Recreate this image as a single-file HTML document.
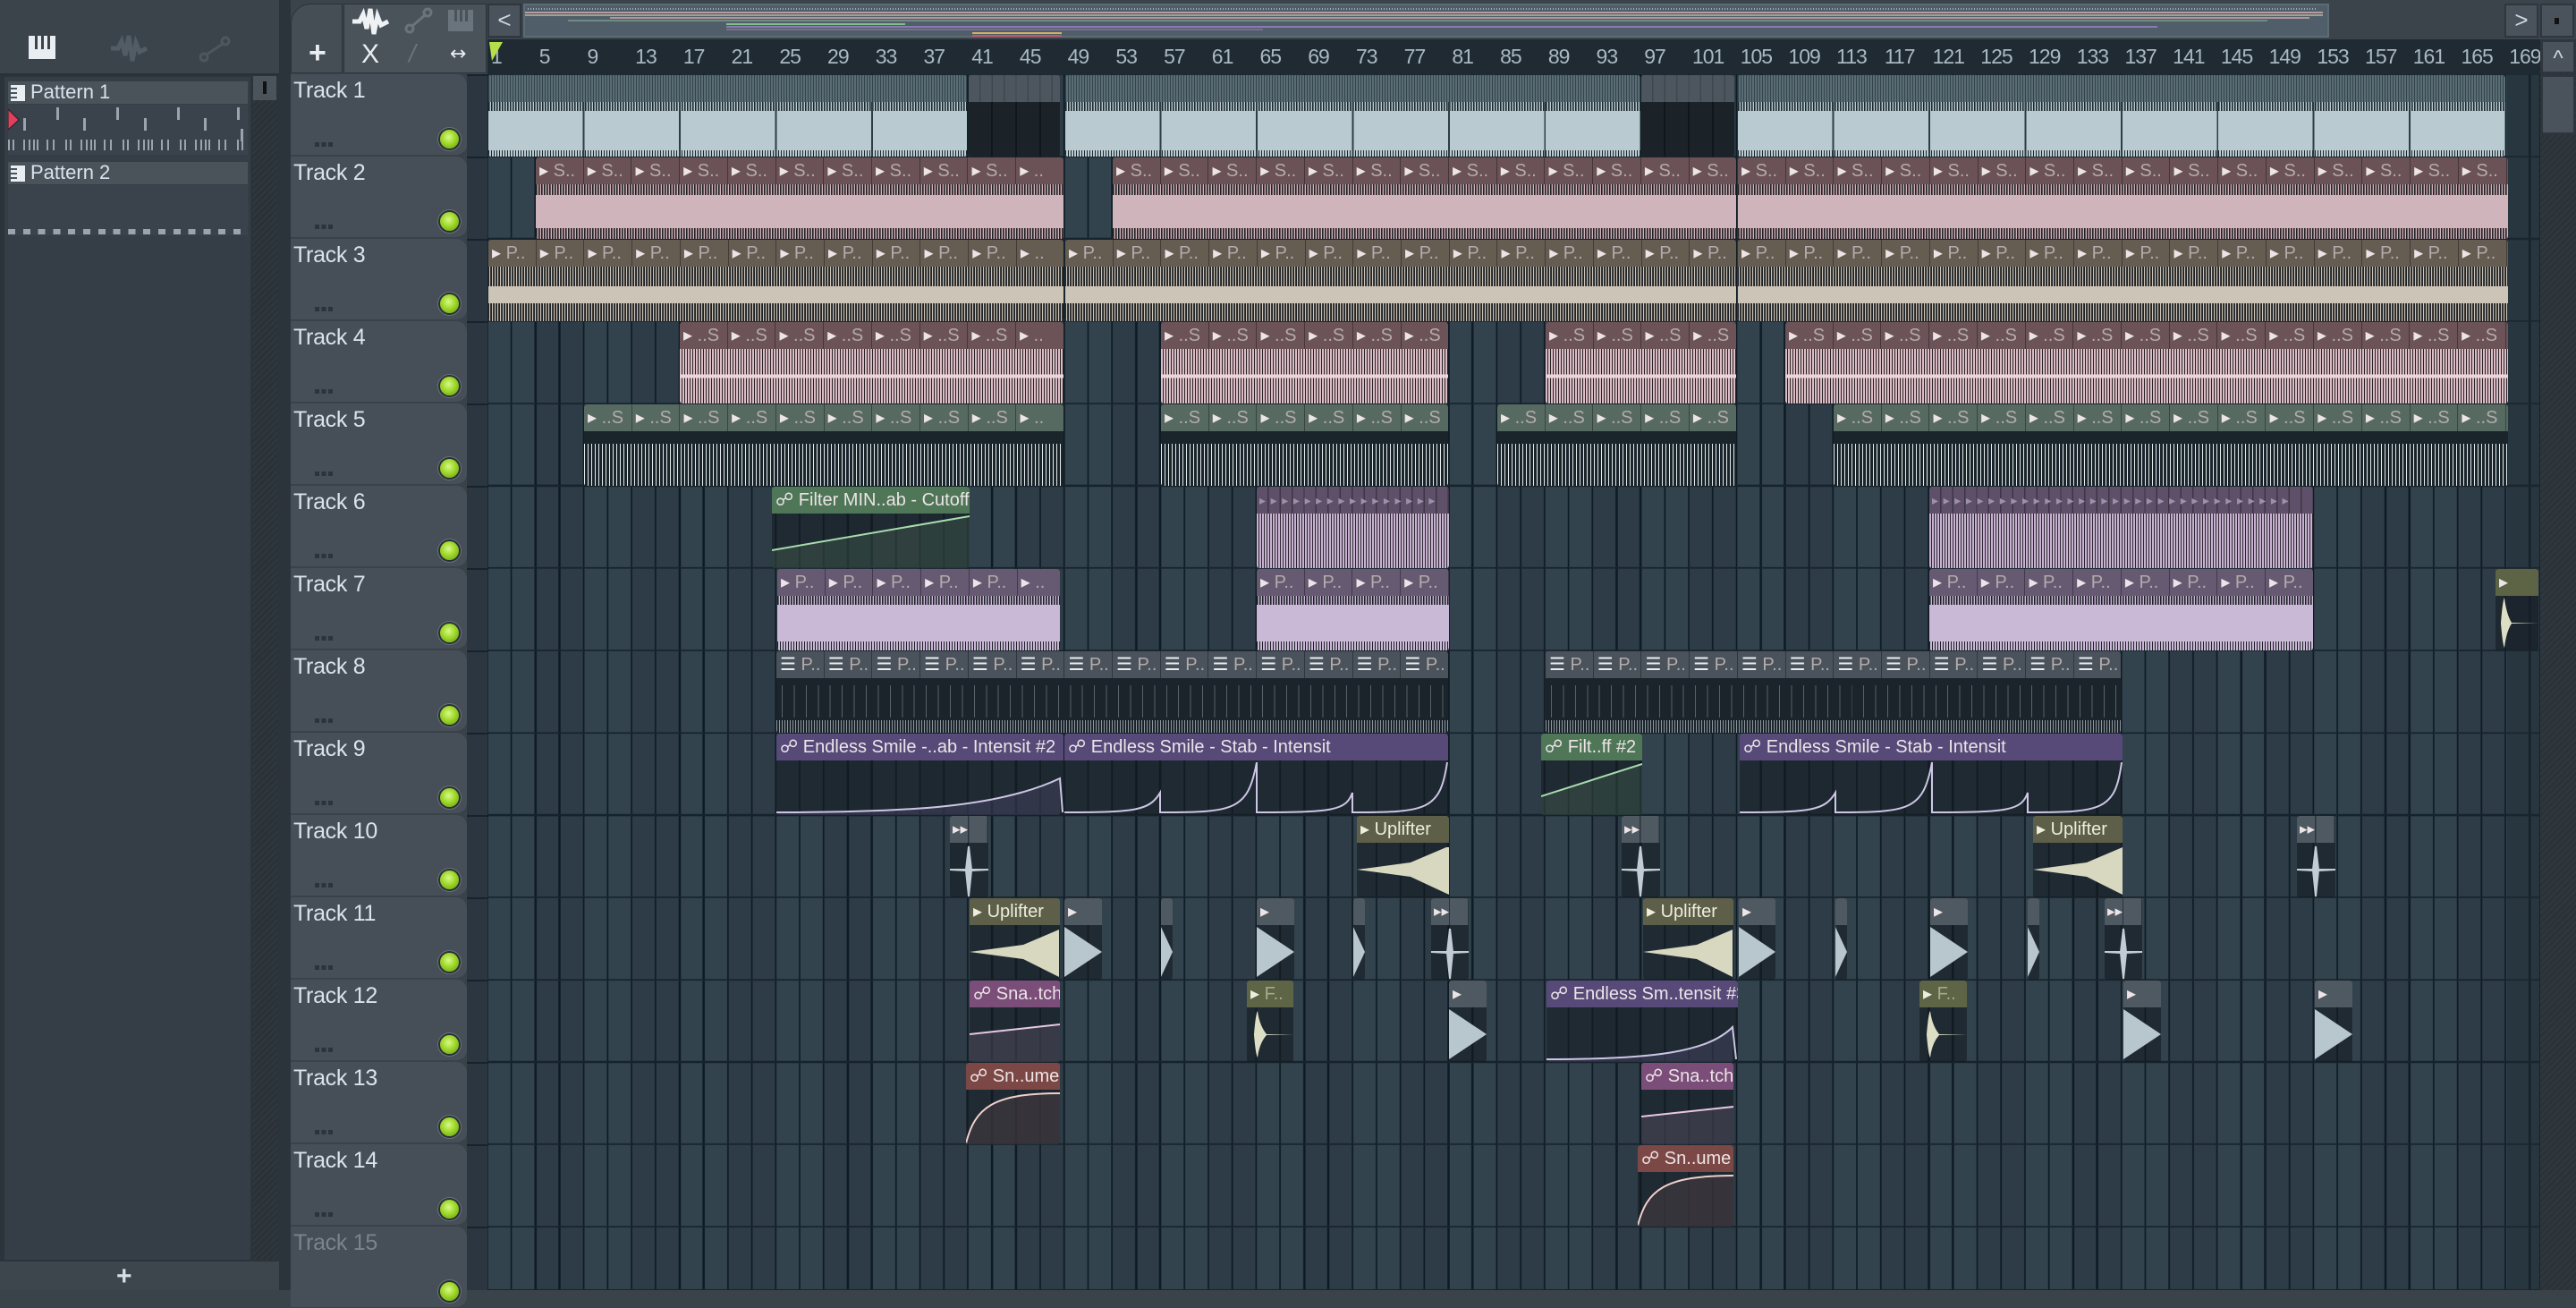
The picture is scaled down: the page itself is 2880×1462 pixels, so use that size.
<!DOCTYPE html>
<html><head><meta charset="utf-8">
<style>
*{box-sizing:border-box}
body{margin:0;width:2880px;height:1442px;overflow:hidden;background:#3a424a;font-family:"Liberation Sans Narrow","Liberation Sans",sans-serif;position:relative}
.a{position:absolute}
.grid{left:545px;top:83px;width:2295px;height:1359px;
background:repeating-linear-gradient(180deg,#17232c 0 2px,transparent 2px 92px),
repeating-linear-gradient(90deg,#0f1b24 0 2px,transparent 2px 26.86px),
repeating-linear-gradient(90deg,#33434e 0 53.72px,#2d3c47 53.72px 107.44px);background-position:0 -1px,-1px 0,0 0}
.th{left:325px;width:197px;height:91px;background:#464e57;border-radius:0 12px 12px 0;border-bottom:1px solid #3a4149}
.th span{position:absolute;left:3px;top:4px;font-size:25px;color:#dbe3ea;letter-spacing:-0.3px}
.th .led{position:absolute;left:167px;top:62px;width:21px;height:21px;border-radius:50%;background:radial-gradient(circle at 45% 40%,#d8f88a 0,#9ed829 45%,#5f9614 100%);box-shadow:0 0 0 2px #2a3136,0 0 0 3px #6a7278}
.th .dots{position:absolute;left:27px;top:76px;width:20px;height:5px;background:repeating-linear-gradient(90deg,#2c333a 0 5px,transparent 5px 7.5px)}
.c{position:absolute;height:91px;overflow:hidden;border-radius:3px}
.h{height:30px;display:flex;align-items:center;font-size:20px;white-space:nowrap;overflow:hidden;color:#ece4e6;border-radius:3px 3px 0 0}
.h i{font-style:normal;flex:0 0 53.72px;height:30px;line-height:30px;padding-left:4px;border-right:1px solid rgba(0,0,0,.35);overflow:hidden}
.h i b{font-weight:normal;color:#b4aaac}
.h u{text-decoration:none;padding-left:4px;line-height:30px}
.bd{height:61px;position:relative}
.w1{background:repeating-linear-gradient(90deg,#1c272d 0 1px,#5d6d74 1px 2px,transparent 2px 3px) 0 0/100% 10px no-repeat,repeating-linear-gradient(90deg,#1c272d 0 1px,transparent 1px 3px) 0 100%/100% 7px no-repeat,#b9cad0}
.h1{background:repeating-linear-gradient(90deg,#33444c 0 1px,#5a6c74 1px 3px)}
.w2{background:repeating-linear-gradient(90deg,#1e2227 0 1px,#6a555a 1px 2px,transparent 2px 3px) 0 0/100% 12px no-repeat,repeating-linear-gradient(90deg,#1e2227 0 1px,#6a555a 1px 2px,transparent 2px 3px) 0 100%/100% 12px no-repeat,#cfb5bb}
.w3{background:repeating-linear-gradient(90deg,#20252a 0 1px,#cdc4b8 1px 2px,#3a3835 2px 3px) 0 0/100% 22px no-repeat,repeating-linear-gradient(90deg,#20252a 0 1px,#cdc4b8 1px 2px,#3a3835 2px 3px) 0 100%/100% 20px no-repeat,#cdc4b8}
.w4{background:linear-gradient(180deg,transparent 0 47%,#ecd6dc 47% 53%,transparent 53%),repeating-linear-gradient(90deg,#dbbdc6 0 2px,#2a2226 2px 3px)}
.w5{background:linear-gradient(180deg,#1a252b 0 14px,transparent 14px),repeating-linear-gradient(90deg,#e4eaec 0 1px,#1a252b 1px 4px)}
.w6{background:repeating-linear-gradient(90deg,#c7b3cf 0 2px,#2e2634 2px 3px)}
.w7{background:repeating-linear-gradient(90deg,#1e2126 0 1px,#6a5f74 1px 2px,transparent 2px 3px) 0 0/100% 10px no-repeat,repeating-linear-gradient(90deg,#1e2126 0 1px,transparent 1px 3px) 0 100%/100% 10px no-repeat,#c9b8d6}
.w8{background:repeating-linear-gradient(90deg,#8d979e 0 1px,transparent 1px 3px) 0 100%/100% 14px no-repeat,repeating-linear-gradient(90deg,transparent 0 6px,#56616a 6px 7px,transparent 7px 13.43px) 0 8px/100% 36px no-repeat,#1b242a}
.dk{background:rgba(18,26,31,.72)}
.au{background:rgba(20,27,33,.6)}
.ru span{display:inline-block;width:53.72px;font-size:23px;color:#a9b8c3;letter-spacing:-1px}
.dv{position:absolute;left:0;top:0;width:100%;height:100%;background:repeating-linear-gradient(90deg,transparent 0 105.5px,#2e3d45 105.5px 107.44px)}
</style></head><body>

<div class="a" style="left:0;top:0;width:2880px;height:83px;background:#3b434b"></div>
<div class="a" style="left:0;top:82px;width:312px;height:2px;background:#2a3036"></div>
<svg class="a" style="left:30px;top:38px" width="36" height="30"><rect x="2" y="2" width="30" height="26" fill="#e8eef2"/><rect x="9" y="2" width="3" height="15" fill="#3b434b"/><rect x="16" y="2" width="3" height="15" fill="#3b434b"/><rect x="23" y="2" width="3" height="15" fill="#3b434b"/></svg>
<svg class="a" style="left:122px;top:38px" width="44" height="32"><path d="M2 16 L10 16 L14 8 L18 24 L22 2 L26 30 L30 10 L34 20 L42 16" stroke="#525c64" stroke-width="5" fill="none"/></svg>
<svg class="a" style="left:222px;top:40px" width="36" height="30"><circle cx="6" cy="24" r="4" fill="none" stroke="#4d575f" stroke-width="3"/><circle cx="30" cy="6" r="4" fill="none" stroke="#4d575f" stroke-width="3"/><line x1="9" y1="21" x2="27" y2="9" stroke="#4d575f" stroke-width="3"/></svg>

<div class="a" style="left:312px;top:0;width:13px;height:1442px;background:#2c343b"></div>
<div class="a" style="left:325px;top:4px;width:58px;height:78px;background:#454d55;border-radius:22px 0 0 0;border:1px solid #2c333a"></div>
<div class="a" style="left:345px;top:40px;font-size:34px;color:#e8eef2;font-family:'Liberation Sans',sans-serif;font-weight:bold">+</div>
<div class="a" style="left:384px;top:4px;width:160px;height:78px;background:#4a525a;border:1px solid #2c333a"></div>
<svg class="a" style="left:392px;top:8px" width="44" height="32"><path d="M2 16 L10 16 L14 8 L18 24 L22 2 L26 30 L30 10 L34 20 L42 16" stroke="#eef2f4" stroke-width="5" fill="none"/></svg>
<svg class="a" style="left:452px;top:8px" width="32" height="30"><circle cx="6" cy="24" r="4" fill="none" stroke="#6a747c" stroke-width="3"/><circle cx="26" cy="6" r="4" fill="none" stroke="#6a747c" stroke-width="3"/><line x1="9" y1="21" x2="23" y2="9" stroke="#6a747c" stroke-width="3"/></svg>
<svg class="a" style="left:500px;top:10px" width="30" height="26"><rect x="1" y="1" width="28" height="24" fill="#6a747c"/><rect x="8" y="1" width="3" height="13" fill="#4a525a"/><rect x="14" y="1" width="3" height="13" fill="#4a525a"/><rect x="20" y="1" width="3" height="13" fill="#4a525a"/></svg>
<div class="a" style="left:404px;top:44px;font-size:30px;color:#e8eef2;font-family:'Liberation Sans',sans-serif">X</div>
<div class="a" style="left:457px;top:44px;font-size:28px;color:#6a747c;font-style:italic">/</div>
<div class="a" style="left:503px;top:48px;font-size:22px;color:#e8eef2;font-family:'DejaVu Sans',sans-serif">↔</div>

<div class="a" style="left:545px;top:4px;width:38px;height:38px;background:#4a535b;border:2px solid #2f363d;color:#cfd6dc;font-size:26px;text-align:center;line-height:32px">&lt;</div>
<div class="a" style="left:585px;top:4px;width:2019px;height:38px;background:#4f5e68;border:2px solid #5d6b74">
 <div class="a" style="left:3px;top:3px;width:2000px;height:2px;background:repeating-linear-gradient(90deg,#9eaab2 0 1px,transparent 1px 3px)"></div>
 <div class="a" style="left:0;top:7px;width:2010px;height:2px;background:#b49ca0"></div>
 <div class="a" style="left:0;top:10px;width:2010px;height:2px;background:#a89d8f"></div>
 <div class="a" style="left:95px;top:13px;width:1900px;height:2px;background:#b4949c"></div>
 <div class="a" style="left:48px;top:16px;width:1900px;height:2px;background:#6f8c84"></div>
 <div class="a" style="left:225px;top:20px;width:200px;height:2px;background:#7fbf8a"></div>
 <div class="a" style="left:225px;top:23px;width:1600px;height:2px;background:#8a7ab0"></div>
 <div class="a" style="left:225px;top:26px;width:600px;height:2px;background:#7a6c94"></div>
 <div class="a" style="left:500px;top:30px;width:100px;height:2px;background:#d0b35e"></div>
 <div class="a" style="left:500px;top:33px;width:100px;height:2px;background:#c85468"></div>
</div>
<div class="a" style="left:2800px;top:4px;width:38px;height:38px;background:#4a535b;border:2px solid #2f363d;color:#cfd6dc;font-size:26px;text-align:center;line-height:32px">&gt;</div>
<div class="a" style="left:2840px;top:4px;width:38px;height:38px;background:#4a535b;border:2px solid #2f363d"><div class="a" style="left:14px;top:14px;width:5px;height:7px;background:#111"></div></div>

<div class="a" style="left:545px;top:44px;width:2295px;height:39px;background:#1f2a33"></div>
<div class="a ru" style="left:549px;top:50px;white-space:nowrap"><span>1</span><span>5</span><span>9</span><span>13</span><span>17</span><span>21</span><span>25</span><span>29</span><span>33</span><span>37</span><span>41</span><span>45</span><span>49</span><span>53</span><span>57</span><span>61</span><span>65</span><span>69</span><span>73</span><span>77</span><span>81</span><span>85</span><span>89</span><span>93</span><span>97</span><span>101</span><span>105</span><span>109</span><span>113</span><span>117</span><span>121</span><span>125</span><span>129</span><span>133</span><span>137</span><span>141</span><span>145</span><span>149</span><span>153</span><span>157</span><span>161</span><span>165</span><span>169</span></div>
<svg class="a" style="left:546px;top:46px" width="18" height="24"><path d="M1 1 L16 1 L4 22 Z" fill="#b6e04a"/></svg>

<div class="a" style="left:2840px;top:44px;width:40px;height:1398px;background:repeating-linear-gradient(135deg,#30383f 0 2px,#2b3238 2px 5px)"></div>
<div class="a" style="left:2841px;top:45px;width:38px;height:37px;background:#4a535b;border:2px solid #2f363d;color:#cfd6dc;font-size:24px;text-align:center;line-height:38px">^</div>
<div class="a" style="left:2841px;top:84px;width:38px;height:66px;background:#4a535b;border:2px solid #2f363d"></div>

<div class="a" style="left:0;top:84px;width:312px;height:1326px;background:#2c343b"></div>
<div class="a" style="left:5px;top:86px;width:275px;height:1322px;background:#353e47"></div>
<div class="a" style="left:282px;top:86px;width:28px;height:1322px;background:repeating-linear-gradient(135deg,#30383f 0 2px,#2a3137 2px 5px)"></div>
<div class="a" style="left:283px;top:85px;width:26px;height:27px;background:#4b535b"><div class="a" style="left:11px;top:6px;width:4px;height:14px;background:#111"></div></div>
<div class="a" style="left:0;top:1410px;width:312px;height:32px;background:#3d454d"></div>
<div class="a" style="left:130px;top:1410px;font-size:30px;color:#d8dfe5;font-family:'Liberation Sans',sans-serif;font-weight:bold">+</div>

<div class="a" style="left:9px;top:91px;width:268px;height:25px;background:#4a525a"></div>
<svg class="a" style="left:12px;top:95px" width="16" height="18"><rect width="16" height="18" fill="#e8eef2"/><rect x="0" y="3" width="7" height="2" fill="#4a525a"/><rect x="0" y="8" width="7" height="2" fill="#4a525a"/><rect x="0" y="13" width="7" height="2" fill="#4a525a"/></svg>
<div class="a" style="left:34px;top:90px;font-size:22px;color:#d9e2ea">Pattern 1</div>
<div class="a" style="left:9px;top:117px;width:268px;height:56px;background:#3a434c"></div>
<svg class="a" style="left:9px;top:117px" width="268" height="56">
<path d="M0 5 L12 17 L0 28Z" fill="#e0405e" stroke="#222" stroke-width="1"/>
<g fill="#9aa4ac"><rect x="54" y="3" width="3" height="14"/><rect x="121" y="3" width="3" height="14"/><rect x="189" y="3" width="3" height="14"/><rect x="256" y="3" width="3" height="14"/>
<rect x="17" y="15" width="3" height="14"/><rect x="84" y="15" width="3" height="14"/><rect x="152" y="15" width="3" height="14"/><rect x="219" y="15" width="3" height="14"/><rect x="260" y="27" width="3" height="14"/></g>
<path d="M0 45h268" stroke="#9aa4ac" stroke-width="12" stroke-dasharray="2 3 2 10 2 4 2 3 2 2 2 9 2 5 2 12" /></svg>
<div class="a" style="left:9px;top:181px;width:268px;height:25px;background:#4a525a"></div>
<svg class="a" style="left:12px;top:185px" width="16" height="18"><rect width="16" height="18" fill="#e8eef2"/><rect x="0" y="3" width="7" height="2" fill="#4a525a"/><rect x="0" y="8" width="7" height="2" fill="#4a525a"/><rect x="0" y="13" width="7" height="2" fill="#4a525a"/></svg>
<div class="a" style="left:34px;top:180px;font-size:22px;color:#d9e2ea">Pattern 2</div>
<div class="a" style="left:9px;top:207px;width:268px;height:56px;background:#3a434c"></div>
<div class="a" style="left:9px;top:256px;width:268px;height:6px;background:repeating-linear-gradient(90deg,#9aa4ac 0 8px,transparent 8px 16.8px)"></div>

<div class="a" style="left:325px;top:83px;width:220px;height:1359px;background:#3a4249"></div>
<div class="a" style="left:522px;top:83px;width:23px;height:1359px;background:repeating-linear-gradient(180deg,#17232c 0 2px,#2b3640 2px 92px)"></div>

<div class="a th" style="top:83px"><span>Track 1</span><div class="dots"></div><div class="led"></div></div>
<div class="a th" style="top:175px"><span>Track 2</span><div class="dots"></div><div class="led"></div></div>
<div class="a th" style="top:267px"><span>Track 3</span><div class="dots"></div><div class="led"></div></div>
<div class="a th" style="top:359px"><span>Track 4</span><div class="dots"></div><div class="led"></div></div>
<div class="a th" style="top:451px"><span>Track 5</span><div class="dots"></div><div class="led"></div></div>
<div class="a th" style="top:543px"><span>Track 6</span><div class="dots"></div><div class="led"></div></div>
<div class="a th" style="top:635px"><span>Track 7</span><div class="dots"></div><div class="led"></div></div>
<div class="a th" style="top:727px"><span>Track 8</span><div class="dots"></div><div class="led"></div></div>
<div class="a th" style="top:819px"><span>Track 9</span><div class="dots"></div><div class="led"></div></div>
<div class="a th" style="top:911px"><span>Track 10</span><div class="dots"></div><div class="led"></div></div>
<div class="a th" style="top:1003px"><span>Track 11</span><div class="dots"></div><div class="led"></div></div>
<div class="a th" style="top:1095px"><span>Track 12</span><div class="dots"></div><div class="led"></div></div>
<div class="a th" style="top:1187px"><span>Track 13</span><div class="dots"></div><div class="led"></div></div>
<div class="a th" style="top:1279px"><span>Track 14</span><div class="dots"></div><div class="led"></div></div>
<div class="a th" style="top:1371px"><span style="color:#7b848c">Track 15</span><div class="led"></div></div>

<div class="a grid"></div>
<div class="a" style="left:2803px;top:83px;width:37px;height:1359px;background:rgba(30,42,50,.5)"></div>

<!-- TRACK 1 -->
<div class="c" style="left:546px;top:84px;width:535px"><div class="h h1"></div><div class="bd w1"><div class="dv"></div></div></div>
<div class="c" style="left:1083px;top:84px;width:102px"><div class="h" style="background:repeating-linear-gradient(90deg,#4d565e 0 12px,#3e464d 12px 13.43px)"></div><div class="bd" style="background:repeating-linear-gradient(90deg,#1b2329 0 25px,#10171c 25px 27px)"></div></div>
<div class="c" style="left:1191px;top:84px;width:643px"><div class="h h1"></div><div class="bd w1"><div class="dv"></div></div></div>
<div class="c" style="left:1835px;top:84px;width:104px"><div class="h" style="background:repeating-linear-gradient(90deg,#4d565e 0 12px,#3e464d 12px 13.43px)"></div><div class="bd" style="background:repeating-linear-gradient(90deg,#1b2329 0 25px,#10171c 25px 27px)"></div></div>
<div class="c" style="left:1943px;top:84px;width:858px"><div class="h h1"></div><div class="bd w1"><div class="dv"></div></div></div>

<!-- TRACK 2 -->
<div class="c" style="left:599px;top:176px;width:590px"><div class="h" style="background:#6a5257"><i>▸ <b>S..</b></i><i>▸ <b>S..</b></i><i>▸ <b>S..</b></i><i>▸ <b>S..</b></i><i>▸ <b>S..</b></i><i>▸ <b>S..</b></i><i>▸ <b>S..</b></i><i>▸ <b>S..</b></i><i>▸ <b>S..</b></i><i>▸ <b>S..</b></i><i>▸ <b>..</b></i></div><div class="bd w2"></div></div>
<div class="c" style="left:1244px;top:176px;width:697px"><div class="h" style="background:#6a5257"><i>▸ <b>S..</b></i><i>▸ <b>S..</b></i><i>▸ <b>S..</b></i><i>▸ <b>S..</b></i><i>▸ <b>S..</b></i><i>▸ <b>S..</b></i><i>▸ <b>S..</b></i><i>▸ <b>S..</b></i><i>▸ <b>S..</b></i><i>▸ <b>S..</b></i><i>▸ <b>S..</b></i><i>▸ <b>S..</b></i><i>▸ <b>S..</b></i></div><div class="bd w2"></div></div>
<div class="c" style="left:1943px;top:176px;width:861px"><div class="h" style="background:#6a5257"><i>▸ <b>S..</b></i><i>▸ <b>S..</b></i><i>▸ <b>S..</b></i><i>▸ <b>S..</b></i><i>▸ <b>S..</b></i><i>▸ <b>S..</b></i><i>▸ <b>S..</b></i><i>▸ <b>S..</b></i><i>▸ <b>S..</b></i><i>▸ <b>S..</b></i><i>▸ <b>S..</b></i><i>▸ <b>S..</b></i><i>▸ <b>S..</b></i><i>▸ <b>S..</b></i><i>▸ <b>S..</b></i><i>▸ <b>S..</b></i></div><div class="bd w2"></div></div>

<!-- TRACK 3 -->
<div class="c" style="left:546px;top:268px;width:643px"><div class="h" style="background:#665d52"><i>▸ <b>P..</b></i><i>▸ <b>P..</b></i><i>▸ <b>P..</b></i><i>▸ <b>P..</b></i><i>▸ <b>P..</b></i><i>▸ <b>P..</b></i><i>▸ <b>P..</b></i><i>▸ <b>P..</b></i><i>▸ <b>P..</b></i><i>▸ <b>P..</b></i><i>▸ <b>P..</b></i><i>▸ <b>..</b></i></div><div class="bd w3"></div></div>
<div class="c" style="left:1191px;top:268px;width:750px"><div class="h" style="background:#665d52"><i>▸ <b>P..</b></i><i>▸ <b>P..</b></i><i>▸ <b>P..</b></i><i>▸ <b>P..</b></i><i>▸ <b>P..</b></i><i>▸ <b>P..</b></i><i>▸ <b>P..</b></i><i>▸ <b>P..</b></i><i>▸ <b>P..</b></i><i>▸ <b>P..</b></i><i>▸ <b>P..</b></i><i>▸ <b>P..</b></i><i>▸ <b>P..</b></i><i>▸ <b>P..</b></i></div><div class="bd w3"></div></div>
<div class="c" style="left:1943px;top:268px;width:861px"><div class="h" style="background:#665d52"><i>▸ <b>P..</b></i><i>▸ <b>P..</b></i><i>▸ <b>P..</b></i><i>▸ <b>P..</b></i><i>▸ <b>P..</b></i><i>▸ <b>P..</b></i><i>▸ <b>P..</b></i><i>▸ <b>P..</b></i><i>▸ <b>P..</b></i><i>▸ <b>P..</b></i><i>▸ <b>P..</b></i><i>▸ <b>P..</b></i><i>▸ <b>P..</b></i><i>▸ <b>P..</b></i><i>▸ <b>P..</b></i><i>▸ <b>P..</b></i></div><div class="bd w3"></div></div>

<!-- TRACK 4 -->
<div class="c" style="left:760px;top:360px;width:429px"><div class="h" style="background:#6b5358"><i>▸ <b>..S</b></i><i>▸ <b>..S</b></i><i>▸ <b>..S</b></i><i>▸ <b>..S</b></i><i>▸ <b>..S</b></i><i>▸ <b>..S</b></i><i>▸ <b>..S</b></i><i>▸ <b>..</b></i></div><div class="bd w4"></div></div>
<div class="c" style="left:1298px;top:360px;width:321px"><div class="h" style="background:#6b5358"><i>▸ <b>..S</b></i><i>▸ <b>..S</b></i><i>▸ <b>..S</b></i><i>▸ <b>..S</b></i><i>▸ <b>..S</b></i><i>▸ <b>..S</b></i></div><div class="bd w4"></div></div>
<div class="c" style="left:1728px;top:360px;width:213px"><div class="h" style="background:#6b5358"><i>▸ <b>..S</b></i><i>▸ <b>..S</b></i><i>▸ <b>..S</b></i><i>▸ <b>..S</b></i></div><div class="bd w4"></div></div>
<div class="c" style="left:1996px;top:360px;width:808px"><div class="h" style="background:#6b5358"><i>▸ <b>..S</b></i><i>▸ <b>..S</b></i><i>▸ <b>..S</b></i><i>▸ <b>..S</b></i><i>▸ <b>..S</b></i><i>▸ <b>..S</b></i><i>▸ <b>..S</b></i><i>▸ <b>..S</b></i><i>▸ <b>..S</b></i><i>▸ <b>..S</b></i><i>▸ <b>..S</b></i><i>▸ <b>..S</b></i><i>▸ <b>..S</b></i><i>▸ <b>..S</b></i><i>▸ <b>..S</b></i></div><div class="bd w4"></div></div>

<!-- TRACK 5 -->
<div class="c" style="left:653px;top:452px;width:536px"><div class="h" style="background:#566a62"><i>▸ <b>..S</b></i><i>▸ <b>..S</b></i><i>▸ <b>..S</b></i><i>▸ <b>..S</b></i><i>▸ <b>..S</b></i><i>▸ <b>..S</b></i><i>▸ <b>..S</b></i><i>▸ <b>..S</b></i><i>▸ <b>..S</b></i><i>▸ <b>..</b></i></div><div class="bd w5"></div></div>
<div class="c" style="left:1298px;top:452px;width:321px"><div class="h" style="background:#566a62"><i>▸ <b>..S</b></i><i>▸ <b>..S</b></i><i>▸ <b>..S</b></i><i>▸ <b>..S</b></i><i>▸ <b>..S</b></i><i>▸ <b>..S</b></i></div><div class="bd w5"></div></div>
<div class="c" style="left:1674px;top:452px;width:267px"><div class="h" style="background:#566a62"><i>▸ <b>..S</b></i><i>▸ <b>..S</b></i><i>▸ <b>..S</b></i><i>▸ <b>..S</b></i><i>▸ <b>..S</b></i></div><div class="bd w5"></div></div>
<div class="c" style="left:2050px;top:452px;width:754px"><div class="h" style="background:#566a62"><i>▸ <b>..S</b></i><i>▸ <b>..S</b></i><i>▸ <b>..S</b></i><i>▸ <b>..S</b></i><i>▸ <b>..S</b></i><i>▸ <b>..S</b></i><i>▸ <b>..S</b></i><i>▸ <b>..S</b></i><i>▸ <b>..S</b></i><i>▸ <b>..S</b></i><i>▸ <b>..S</b></i><i>▸ <b>..S</b></i><i>▸ <b>..S</b></i><i>▸ <b>..S</b></i></div><div class="bd w5"></div></div>

<!-- TRACK 6 -->
<div class="c" style="left:863px;top:544px;width:221px"><div class="h" style="background:#4e7657"><u>☍ Filter MIN..ab - Cutoff</u></div><div class="bd au"><svg width="221" height="61"><path d="M0 41 L221 3 L221 61 L0 61Z" fill="rgba(90,130,100,.25)"/><path d="M0 41 L221 3" stroke="#a8dcae" stroke-width="2" fill="none"/></svg></div></div>
<div class="c" style="left:1405px;top:544px;width:215px"><div class="h" style="background:repeating-linear-gradient(90deg,#5e5068 0 12px,#3e3546 12px 13.43px);color:#9f8fae;font-size:14px;letter-spacing:5.6px;padding-left:3px">▸▸▸▸▸▸▸▸▸▸▸▸▸▸▸▸</div><div class="bd w6"></div></div>
<div class="c" style="left:2157px;top:544px;width:429px"><div class="h" style="background:repeating-linear-gradient(90deg,#5e5068 0 12px,#3e3546 12px 13.43px);color:#9f8fae;font-size:14px;letter-spacing:5.6px;padding-left:3px">▸▸▸▸▸▸▸▸▸▸▸▸▸▸▸▸▸▸▸▸▸▸▸▸▸▸▸▸▸▸▸▸</div><div class="bd w6"></div></div>

<!-- TRACK 7 -->
<div class="c" style="left:869px;top:636px;width:316px"><div class="h" style="background:#665a73"><i>▸ <b>P..</b></i><i>▸ <b>P..</b></i><i>▸ <b>P..</b></i><i>▸ <b>P..</b></i><i>▸ <b>P..</b></i><i>▸ <b>..</b></i></div><div class="bd w7"></div></div>
<div class="c" style="left:1405px;top:636px;width:215px"><div class="h" style="background:#665a73"><i>▸ <b>P..</b></i><i>▸ <b>P..</b></i><i>▸ <b>P..</b></i><i>▸ <b>P..</b></i></div><div class="bd w7"></div></div>
<div class="c" style="left:2157px;top:636px;width:429px"><div class="h" style="background:#665a73"><i>▸ <b>P..</b></i><i>▸ <b>P..</b></i><i>▸ <b>P..</b></i><i>▸ <b>P..</b></i><i>▸ <b>P..</b></i><i>▸ <b>P..</b></i><i>▸ <b>P..</b></i><i>▸ <b>P..</b></i></div><div class="bd w7"></div></div>
<div class="c" style="left:2790px;top:636px;width:48px"><div class="h" style="background:#5c6445"><u>▸</u></div><div class="bd au"><svg width="48" height="61"><path d="M6 30 Q8 5 10 2 Q12 20 18 30 L48 30 L18 31 Q12 40 10 58 Q8 55 6 31Z" fill="#dcdfc4"/></svg></div></div>

<!-- TRACK 8 -->
<div class="c" style="left:868px;top:728px;width:751px"><div class="h" style="background:#4a535b;color:#e8eef2"><i>☰ <b>P..</b></i><i>☰ <b>P..</b></i><i>☰ <b>P..</b></i><i>☰ <b>P..</b></i><i>☰ <b>P..</b></i><i>☰ <b>P..</b></i><i>☰ <b>P..</b></i><i>☰ <b>P..</b></i><i>☰ <b>P..</b></i><i>☰ <b>P..</b></i><i>☰ <b>P..</b></i><i>☰ <b>P..</b></i><i>☰ <b>P..</b></i><i>☰ <b>P..</b></i></div><div class="bd w8"></div></div>
<div class="c" style="left:1728px;top:728px;width:643px"><div class="h" style="background:#4a535b;color:#e8eef2"><i>☰ <b>P..</b></i><i>☰ <b>P..</b></i><i>☰ <b>P..</b></i><i>☰ <b>P..</b></i><i>☰ <b>P..</b></i><i>☰ <b>P..</b></i><i>☰ <b>P..</b></i><i>☰ <b>P..</b></i><i>☰ <b>P..</b></i><i>☰ <b>P..</b></i><i>☰ <b>P..</b></i><i>☰ <b>P..</b></i></div><div class="bd w8"></div></div>

<!-- TRACK 9 -->
<div class="c" style="left:868px;top:820px;width:321px"><div class="h" style="background:#574a79"><u>☍ Endless Smile -..ab - Intensit #2</u></div><div class="bd au"><svg width="321" height="61"><path d="M0 58 C150 58 250 52 317 20 L317 61 L0 61Z" fill="rgba(90,80,120,.35)"/><path d="M0 58 C150 58 250 52 317 20 L320 58" stroke="#cdc6e6" stroke-width="2" fill="none"/></svg></div></div>
<div class="c" style="left:1190px;top:820px;width:429px"><div class="h" style="background:#574a79"><u>☍ Endless Smile - Stab - Intensit</u></div><div class="bd au"><svg width="429" height="61"><path d="M0 58 C80 58 95 56 107 36 L107 58 C190 58 205 56 215 2 L215 58 C300 58 315 56 322 36 L322 58 C405 58 420 56 428 2" stroke="#cdc6e6" stroke-width="2" fill="none"/></svg></div></div>
<div class="c" style="left:1723px;top:820px;width:113px"><div class="h" style="background:#4e7657"><u>☍ Filt..ff #2</u></div><div class="bd au"><svg width="113" height="61"><path d="M0 40 L113 4 L113 61 L0 61Z" fill="rgba(90,130,100,.25)"/><path d="M0 40 L113 4" stroke="#a8dcae" stroke-width="2"/></svg></div></div>
<div class="c" style="left:1945px;top:820px;width:428px"><div class="h" style="background:#574a79"><u>☍ Endless Smile - Stab - Intensit</u></div><div class="bd au"><svg width="428" height="61"><path d="M0 58 C80 58 95 56 107 36 L107 58 C190 58 205 56 215 2 L215 58 C300 58 315 56 322 36 L322 58 C405 58 420 56 427 2" stroke="#cdc6e6" stroke-width="2" fill="none"/></svg></div></div>

<!-- TRACK 10 -->
<div class="c" style="left:1062px;top:912px;width:43px"><div class="h" style="background:repeating-linear-gradient(90deg,#4e5961 0 20px,#2b343b 20px 21.5px)"><u style="padding-left:3px;font-size:17px">▸▸</u></div><div class="bd au"><svg width="43" height="61"><path d="M0 30 L18 30 L21 4 L24 30 L43 30 L24 31 L21 60 L18 31Z" fill="#c2ccd3" stroke="#c2ccd3" stroke-width="2"/></svg></div></div>
<div class="c" style="left:1517px;top:912px;width:103px"><div class="h" style="background:#5e5f48;color:#eceede"><u>▸ Uplifter</u></div><div class="bd au"><svg width="103" height="61"><path d="M0 30 L60 22 L100 5 L103 5 L103 58 L60 38Z" fill="#d7d8bf"/></svg></div></div>
<div class="c" style="left:1813px;top:912px;width:43px"><div class="h" style="background:repeating-linear-gradient(90deg,#4e5961 0 20px,#2b343b 20px 21.5px)"><u style="padding-left:3px;font-size:17px">▸▸</u></div><div class="bd au"><svg width="43" height="61"><path d="M0 30 L18 30 L21 4 L24 30 L43 30 L24 31 L21 60 L18 31Z" fill="#c2ccd3" stroke="#c2ccd3" stroke-width="2"/></svg></div></div>
<div class="c" style="left:2273px;top:912px;width:100px"><div class="h" style="background:#5e5f48;color:#eceede"><u>▸ Uplifter</u></div><div class="bd au"><svg width="100" height="61"><path d="M0 30 L60 22 L100 5 L100 58 L60 38Z" fill="#d7d8bf"/></svg></div></div>
<div class="c" style="left:2568px;top:912px;width:43px"><div class="h" style="background:repeating-linear-gradient(90deg,#4e5961 0 20px,#2b343b 20px 21.5px)"><u style="padding-left:3px;font-size:17px">▸▸</u></div><div class="bd au"><svg width="43" height="61"><path d="M0 30 L18 30 L21 4 L24 30 L43 30 L24 31 L21 60 L18 31Z" fill="#c2ccd3" stroke="#c2ccd3" stroke-width="2"/></svg></div></div>

<!-- TRACK 11 -->
<div class="c" style="left:1084px;top:1004px;width:101px"><div class="h" style="background:#5e5f48;color:#eceede"><u>▸ Uplifter</u></div><div class="bd au"><svg width="101" height="61"><path d="M0 30 L60 22 L100 5 L100 58 L60 38Z" fill="#d7d8bf"/></svg></div></div>
<div class="c" style="left:1190px;top:1004px;width:42px"><div class="h" style="background:#4e5961"><u>▸</u></div><div class="bd au"><svg width="42" height="61"><path d="M0 2 L42 30 L0 58Z" fill="#b8c6cd"/></svg></div></div>
<div class="c" style="left:1298px;top:1004px;width:13px"><div class="h" style="background:#4e5961"></div><div class="bd au"><svg width="13" height="61"><path d="M0 2 L13 30 L0 58Z" fill="#b8c6cd"/></svg></div></div>
<div class="c" style="left:1405px;top:1004px;width:42px"><div class="h" style="background:#4e5961"><u>▸</u></div><div class="bd au"><svg width="42" height="61"><path d="M0 2 L42 30 L0 58Z" fill="#b8c6cd"/></svg></div></div>
<div class="c" style="left:1513px;top:1004px;width:13px"><div class="h" style="background:#4e5961"></div><div class="bd au"><svg width="13" height="61"><path d="M0 2 L13 30 L0 58Z" fill="#b8c6cd"/></svg></div></div>
<div class="c" style="left:1600px;top:1004px;width:42px"><div class="h" style="background:repeating-linear-gradient(90deg,#4e5961 0 20px,#2b343b 20px 21px)"><u style="padding-left:3px;font-size:17px">▸▸</u></div><div class="bd au"><svg width="42" height="61"><path d="M0 30 L18 30 L21 4 L24 30 L42 30 L24 31 L21 60 L18 31Z" fill="#c2ccd3" stroke="#c2ccd3" stroke-width="2"/></svg></div></div>
<div class="c" style="left:1837px;top:1004px;width:101px"><div class="h" style="background:#5e5f48;color:#eceede"><u>▸ Uplifter</u></div><div class="bd au"><svg width="101" height="61"><path d="M0 30 L60 22 L100 5 L100 58 L60 38Z" fill="#d7d8bf"/></svg></div></div>
<div class="c" style="left:1944px;top:1004px;width:41px"><div class="h" style="background:#4e5961"><u>▸</u></div><div class="bd au"><svg width="41" height="61"><path d="M0 2 L41 30 L0 58Z" fill="#b8c6cd"/></svg></div></div>
<div class="c" style="left:2052px;top:1004px;width:13px"><div class="h" style="background:#4e5961"></div><div class="bd au"><svg width="13" height="61"><path d="M0 2 L13 30 L0 58Z" fill="#b8c6cd"/></svg></div></div>
<div class="c" style="left:2158px;top:1004px;width:42px"><div class="h" style="background:#4e5961"><u>▸</u></div><div class="bd au"><svg width="42" height="61"><path d="M0 2 L42 30 L0 58Z" fill="#b8c6cd"/></svg></div></div>
<div class="c" style="left:2267px;top:1004px;width:13px"><div class="h" style="background:#4e5961"></div><div class="bd au"><svg width="13" height="61"><path d="M0 2 L13 30 L0 58Z" fill="#b8c6cd"/></svg></div></div>
<div class="c" style="left:2353px;top:1004px;width:42px"><div class="h" style="background:repeating-linear-gradient(90deg,#4e5961 0 20px,#2b343b 20px 21px)"><u style="padding-left:3px;font-size:17px">▸▸</u></div><div class="bd au"><svg width="42" height="61"><path d="M0 30 L18 30 L21 4 L24 30 L42 30 L24 31 L21 60 L18 31Z" fill="#c2ccd3" stroke="#c2ccd3" stroke-width="2"/></svg></div></div>

<!-- TRACK 12 -->
<div class="c" style="left:1084px;top:1096px;width:101px"><div class="h" style="background:#7b4e7a"><u>☍ Sna..tch</u></div><div class="bd au"><svg width="101" height="61"><path d="M0 30 L101 19 L101 61 L0 61Z" fill="rgba(90,80,100,.45)"/><path d="M0 30 L101 19" stroke="#e8c8e6" stroke-width="2"/></svg></div></div>
<div class="c" style="left:1394px;top:1096px;width:52px"><div class="h" style="background:#5e6446;color:#eceede"><u>▸ <span style="color:#a7a98f">F..</span></u></div><div class="bd au"><svg width="52" height="61"><path d="M8 30 Q10 6 12 4 Q14 20 22 30 L52 30 L22 31 Q14 40 12 56 Q10 54 8 31Z" fill="#dcdfc4"/></svg></div></div>
<div class="c" style="left:1620px;top:1096px;width:42px"><div class="h" style="background:#4e5961"><u>▸</u></div><div class="bd au"><svg width="42" height="61"><path d="M0 2 L42 30 L0 58Z" fill="#b8c6cd"/></svg></div></div>
<div class="c" style="left:1729px;top:1096px;width:214px"><div class="h" style="background:#574a79"><u>☍ Endless Sm..tensit #3</u></div><div class="bd au"><svg width="214" height="61"><path d="M0 58 C120 58 180 50 208 22 L208 61 L0 61Z" fill="rgba(90,80,120,.35)"/><path d="M0 58 C120 58 180 50 208 22 L212 58" stroke="#cdc6e6" stroke-width="2" fill="none"/></svg></div></div>
<div class="c" style="left:2146px;top:1096px;width:53px"><div class="h" style="background:#5e6446;color:#eceede"><u>▸ <span style="color:#a7a98f">F..</span></u></div><div class="bd au"><svg width="53" height="61"><path d="M8 30 Q10 6 12 4 Q14 20 22 30 L53 30 L22 31 Q14 40 12 56 Q10 54 8 31Z" fill="#dcdfc4"/></svg></div></div>
<div class="c" style="left:2374px;top:1096px;width:42px"><div class="h" style="background:#4e5961"><u>▸</u></div><div class="bd au"><svg width="42" height="61"><path d="M0 2 L42 30 L0 58Z" fill="#b8c6cd"/></svg></div></div>
<div class="c" style="left:2588px;top:1096px;width:42px"><div class="h" style="background:#4e5961"><u>▸</u></div><div class="bd au"><svg width="42" height="61"><path d="M0 2 L42 30 L0 58Z" fill="#b8c6cd"/></svg></div></div>

<!-- TRACK 13 -->
<div class="c" style="left:1080px;top:1188px;width:105px"><div class="h" style="background:#7c4845"><u>☍ Sn..ume</u></div><div class="bd au"><svg width="105" height="61"><path d="M0 60 C10 20 30 4 105 4 L105 61 L0 61Z" fill="rgba(70,60,65,.6)"/><path d="M0 60 C10 20 30 4 105 4" stroke="#f0d0cc" stroke-width="2" fill="none"/></svg></div></div>
<div class="c" style="left:1835px;top:1188px;width:103px"><div class="h" style="background:#7b4e7a"><u>☍ Sna..tch</u></div><div class="bd au"><svg width="103" height="61"><path d="M0 30 L103 19 L103 61 L0 61Z" fill="rgba(90,80,100,.45)"/><path d="M0 30 L103 19" stroke="#e8c8e6" stroke-width="2"/></svg></div></div>

<!-- TRACK 14 -->
<div class="c" style="left:1831px;top:1280px;width:107px"><div class="h" style="background:#7c4845"><u>☍ Sn..ume</u></div><div class="bd au"><svg width="107" height="61"><path d="M0 60 C10 20 30 4 107 4 L107 61 L0 61Z" fill="rgba(70,60,65,.6)"/><path d="M0 60 C10 20 30 4 107 4" stroke="#f0d0cc" stroke-width="2" fill="none"/></svg></div></div>

</body></html>
